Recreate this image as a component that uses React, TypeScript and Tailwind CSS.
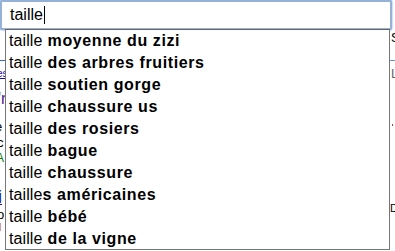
import React from "react";

const items: [string, string][] = [
  ["taille", " moyenne du zizi"],
  ["taille", " des arbres fruitiers"],
  ["taille", " soutien gorge"],
  ["taille", " chaussure us"],
  ["taille", " des rosiers"],
  ["taille", " bague"],
  ["taille", " chaussure"],
  ["taille", "s américaines"],
  ["taille", " bébé"],
  ["taille", " de la vigne"],
];

function PageBehind() {
  return (
    <div className="absolute inset-0">
      <div className="absolute left-0 top-[60px] w-[6px] h-[1px] bg-[#3366cc]" />
      <div className="absolute left-[-3px] top-[68px] text-[10px] leading-[12px] text-[#1a0dab] underline">es</div>
      <div className="absolute left-[-2px] top-[90px] text-[16px] leading-[18px] text-[#551a8b]">'r</div>
      <div className="absolute left-[-5px] top-[120px] text-[13px] leading-[14px]">e</div>
      <div className="absolute left-[-3px] top-[136px] text-[13px] leading-[14px]">c</div>
      <div className="absolute left-[-4px] top-[151px] text-[12px] leading-[14px] text-[#008000]">A</div>
      <div className="absolute left-[-2px] top-[187px] text-[18px] leading-[20px] text-[#1a0dab] underline">i</div>
      <div className="absolute left-[-3px] top-[208px] text-[13px] leading-[14px]">o</div>
      <div className="absolute left-[-1px] top-[221px] text-[11px] leading-[12px] text-[#c87a00]">l</div>
      <div className="absolute left-[-4px] top-[229px] text-[12px] leading-[14px] text-[#008000]">r</div>
      <div className="absolute left-[391px] top-[31px] text-[13px] leading-[14px]">S</div>
      <div className="absolute left-[390px] top-[60px] w-[6px] h-[1px] bg-[#6b90da]" />
      <div className="absolute left-[391px] top-[67px] text-[13px] leading-[14px] text-[#666]">L</div>
      <div className="absolute left-[392px] top-[124px] w-[1px] h-[2px] bg-[#cc3333]" />
      <div className="absolute left-[390px] top-[202px] text-[11px] leading-[12px] text-[#000]">D</div>
    </div>
  );
}

export default function App() {
  return (
    <div
      className="relative w-[395px] h-[251px] overflow-hidden bg-white text-black"
      style={{ fontFamily: '"Liberation Sans", Arial, sans-serif' }}
    >
      <PageBehind />
      <div className="relative flex flex-col">
        {/* search input */}
        <div className="w-[392px] h-[30px] rounded-[2px] bg-[#8fb0e0] p-[1px] shadow-[0_0_2px_#5b8ad6]">
          <div className="w-full h-full border border-[#9db2cf] bg-white flex items-center pl-[8px]">
            <span className="text-[16px] leading-[18px]">taille</span>
            <span className="ml-[1px] w-[1px] h-[18px] bg-black" />
          </div>
        </div>

        {/* suggestions dropdown */}
        <div className="ml-[5px] mt-[-1px] w-[385px] h-[221px] border border-[#777] border-t-[#666] bg-white flex flex-col">
          {items.map(([a, b], i) => (
            <div key={i} className="h-[22px] flex items-center pl-[3px] text-[16px] leading-[22px] whitespace-nowrap">
              <span className="tracking-[0.1px]">{a}</span>
              <span className="font-bold whitespace-pre tracking-[0.6px]">{b}</span>
            </div>
          ))}
        </div>
      </div>
    </div>
  );
}
